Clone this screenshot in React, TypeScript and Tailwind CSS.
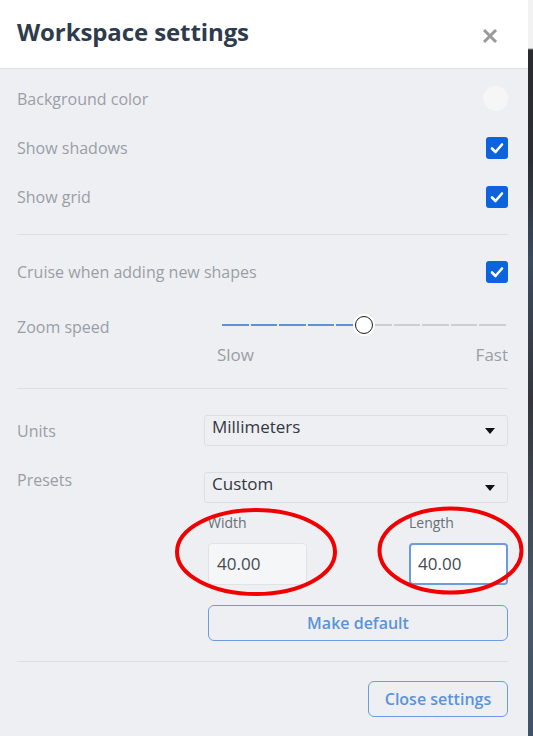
import { useState } from 'react';

function Check({ checked }: { checked: boolean }) {
  return (
    <div className="flex h-[22px] w-[22px] items-center justify-center rounded-[3px] bg-[#0b63de]">
      {checked && (
        <svg width="14" height="12" viewBox="0 0 14 12" fill="none">
          <path d="M2 6.5 L5.5 10 L12 2.5" stroke="#fff" strokeWidth="2.6" strokeLinecap="round" strokeLinejoin="round" />
        </svg>
      )}
    </div>
  );
}

function Select({ value }: { value: string }) {
  return (
    <div className="flex h-[31px] flex-1 items-center justify-between rounded-[3px] border border-[#dcdee3] pl-[7px] pr-[12px] text-[17px] text-[#333840]">
      <span className="-mt-[6px]">{value}</span>
      <svg width="10" height="6" viewBox="0 0 10 6" className="mt-[2px]">
        <path d="M0 0 H10 L5 6 Z" fill="#111" />
      </svg>
    </div>
  );
}

function Row({ label, children }: { label: string; children: React.ReactNode }) {
  return (
    <div className="flex h-[49px] items-center justify-between">
      <span className="text-[#9a9ea6]">{label}</span>
      {children}
    </div>
  );
}

export default function App() {
  const [shadows] = useState(true);
  const [grid] = useState(true);
  const [cruise] = useState(true);
  const steps = 10;
  const active = 5;

  return (
    <div
      className="relative flex h-[736px] w-[533px] overflow-hidden text-[16px]"
      style={{ fontFamily: '"Open Sans", "Noto Sans", sans-serif' }}
    >
      <div className="flex w-[528px] flex-col bg-[#eeeff3]">
        <div className="flex h-[69px] shrink-0 items-center justify-between border-b border-[#dfe1e5] bg-white pl-[17px] pr-[30px]">
          <h1 className="-mt-[5px] text-[24px] font-bold tracking-[-0.1px] text-[#2e3b4c]">Workspace settings</h1>
          <svg width="16" height="16" viewBox="0 0 16 16" className="mt-[4px]">
            <path d="M2 2 L14 14 M14 2 L2 14" stroke="#9a9a9a" strokeWidth="3" />
          </svg>
        </div>

        <div className="flex flex-col pl-[17px] pr-[20px] pt-[5px]">
          <Row label="Background color">
            <div className="h-[25px] w-[25px] rounded-full bg-[#f6f6f7]" />
          </Row>
          <Row label="Show shadows">
            <Check checked={shadows} />
          </Row>
          <Row label="Show grid">
            <Check checked={grid} />
          </Row>
          <div className="mt-[13px] border-t border-[#dcdee2]" />
          <div className="flex h-[72px] items-center justify-between pt-[1px]">
            <span className="text-[#9a9ea6]">Cruise when adding new shapes</span>
            <Check checked={cruise} />
          </div>
          <div className="mt-[17px] flex items-start justify-between">
            <span className="mt-[-9px] text-[#9a9ea6]">Zoom speed</span>
            <div className="flex w-[291px] flex-col">
              <div className="relative flex h-[2px] gap-[2px] pl-[5px] pr-[2px]">
                {Array.from({ length: steps }).map((_, i) => (
                  <div key={i} className={`h-[2px] flex-1 ${i < active ? 'bg-[#5b93db]' : 'bg-[#cdcdcf]'}`} />
                ))}
                <div className="absolute left-[136px] top-[-10px] flex h-[22px] w-[22px] items-center justify-center rounded-full bg-white">
                  <div className="h-[18px] w-[18px] rounded-full border-[1.5px] border-[#1e1e1e] bg-white" />
                </div>
              </div>
              <div className="mt-[16px] flex justify-between text-[17px] text-[#9a9ea6]">
                <span>Slow</span>
                <span>Fast</span>
              </div>
            </div>
          </div>
          <div className="mt-[20px] border-t border-[#dcdee2]" />

          <div className="mt-[26px] flex items-center">
            <span className="-mt-[1px] w-[187px] pt-[2px] text-[#9a9ea6]">Units</span>
            <Select value="Millimeters" />
          </div>
          <div className="mt-[26px] flex items-start">
            <span className="-mt-[4px] w-[187px] text-[#9a9ea6]">Presets</span>
            <Select value="Custom" />
          </div>
          <div className="ml-[191px] mt-[9px] flex justify-between">
            <div className="flex flex-col">
              <span className="text-[14px] text-[#6a6e75]">Width</span>
              <div className="mt-[10px] flex h-[42px] w-[99px] items-center rounded-[4px] border border-[#e0e2e6] bg-[#f5f6f8] pl-[8px] text-[17px] text-[#444a52]">
                40.00
              </div>
            </div>
            <div className="flex flex-col">
              <span className="text-[14px] text-[#6a6e75]">Length</span>
              <div className="mt-[10px] flex h-[42px] w-[99px] items-center rounded-[4px] border-2 border-[#6c9be0] bg-white pl-[7px] text-[17px] text-[#444a52]">
                40.00
              </div>
            </div>
          </div>
          <button className="ml-[191px] mt-[20px] h-[36px] rounded-[6px] border border-[#6c9be0] text-[16px] font-semibold text-[#5b93db]">
            Make default
          </button>
          <div className="mt-[20px] border-t border-[#dcdee2]" />
          <div className="mt-[19px] flex justify-end">
            <button className="h-[36px] w-[140px] rounded-[6px] border border-[#6c9be0] text-[16px] font-semibold text-[#5b93db]">
              Close settings
            </button>
          </div>
        </div>
      </div>
      <div className="w-[5px] bg-[linear-gradient(180deg,#f2f2f2_0px,#f2f2f2_48px,#2a2b30_50px,#2b2d33_160px,#3b4a5e_260px,#34363c_400px,#4a5868_600px,#40526a_736px)]" />

      <svg className="pointer-events-none absolute left-0 top-0" width="533" height="736">
        <ellipse cx="256" cy="552" rx="79" ry="42" fill="none" stroke="#f00000" strokeWidth="4" />
        <ellipse cx="450.5" cy="550.5" rx="71" ry="42" fill="none" stroke="#f00000" strokeWidth="4" />
      </svg>
    </div>
  );
}
